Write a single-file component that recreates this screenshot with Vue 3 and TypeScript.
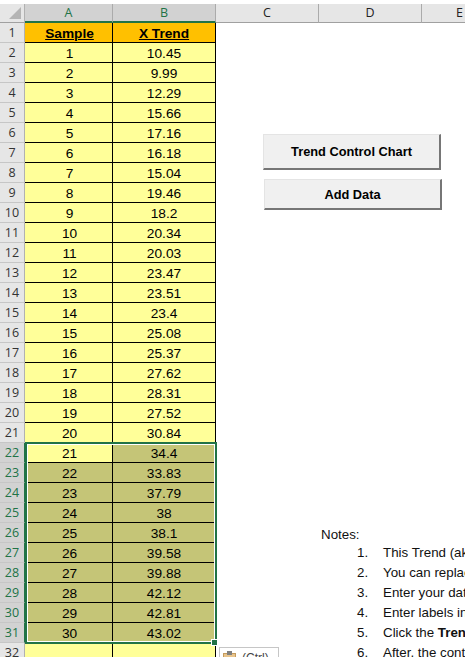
<script setup lang="ts">
const values = [
  '10.45', '9.99', '12.29', '15.66', '17.16', '16.18', '15.04', '19.46', '18.2', '20.34',
  '20.03', '23.47', '23.51', '23.4', '25.08', '25.37', '27.62', '28.31', '27.52', '30.84',
  '34.4', '33.83', '37.79', '38', '38.1', '39.58', '39.88', '42.12', '42.81', '43.02'
]

const rows = values.map((value, i) => ({ row: i + 2, sample: i + 1, value }))

const notes = [
  'This Trend (aka Run Chart) shows',
  'You can replace the sample data',
  'Enter your data in the yellow cells',
  'Enter labels in the header row',
  '',
  'After, the control chart appears'
]
</script>

<template>
  <div class="sheet">
    <div class="col-heads">
      <div class="corner"><span class="triangle" /></div>
      <div class="head head-a selected">A</div>
      <div class="head head-b selected">B</div>
      <div class="head head-c">C</div>
      <div class="head head-c">D</div>
      <div class="head head-e">E</div>
    </div>

    <div class="body">
      <div class="table">
        <div class="row-no">1</div>
        <div class="cell title cell-a"><u>Sample</u></div>
        <div class="cell title cell-b"><u>X Trend</u></div>

        <template v-for="r in rows" :key="r.row">
          <div class="row-no" :class="{ picked: r.row >= 22 }">{{ r.row }}</div>
          <div class="cell cell-a" :class="{ shaded: r.row > 22 }">{{ r.sample }}</div>
          <div class="cell cell-b" :class="{ shaded: r.row >= 22 }">{{ r.value }}</div>
        </template>

        <div class="row-no">32</div>
        <div class="cell cell-a" />
        <div class="cell cell-b" />

        <div class="selection"><span class="handle" /></div>
      </div>

      <div class="side">
        <div class="buttons">
          <button class="macro-btn first">Trend Control Chart</button>
          <button class="macro-btn second">Add Data</button>
        </div>

        <div class="notes">
          <div class="notes-title">Notes:</div>
          <ol class="notes-list">
            <li v-for="(note, i) in notes" :key="i">
              <span class="num">{{ i + 1 }}.</span>
              <span v-if="i === 4">Click the <b>Trend Control Chart</b> button</span>
              <span v-else>{{ note }}</span>
            </li>
          </ol>
        </div>

        <div class="paste">
          <svg width="14" height="14" viewBox="0 0 14 14">
            <rect x="0.5" y="2.5" width="12" height="11" fill="#e8c48c" stroke="#c49a5c" />
            <rect x="4" y="0" width="5" height="4" fill="#7f7f7f" />
          </svg>
          <span>(Ctrl)</span>
        </div>
      </div>
    </div>
  </div>
</template>

<style>
html,
body {
  margin: 0;
  overflow: hidden;
  background: #fff;
}
</style>

<style scoped>
.sheet {
  width: 465px;
  height: 657px;
  overflow: hidden;
  font-family: 'Liberation Sans', Arial, sans-serif;
  font-size: 13.33px;
  color: #000;
  padding-top: 4px;
  box-sizing: border-box;
}

.col-heads {
  display: flex;
  height: 19px;
  background: #e6e6e6;
  box-sizing: border-box;
}

.corner {
  width: 25px;
  flex: none;
  position: relative;
  background: #e6e6e6;
  box-sizing: border-box;
  border-right: 1px solid #b1b1b1;
  border-bottom: 1px solid #a0a0a0;
}

.triangle {
  position: absolute;
  right: 3px;
  bottom: 3px;
  width: 0;
  height: 0;
  border-left: 12px solid transparent;
  border-bottom: 12px solid #b4b4b4;
}

.head {
  flex: none;
  box-sizing: border-box;
  text-align: center;
  line-height: 18px;
  font-family: 'Open Sans', 'Noto Sans', sans-serif;
  font-size: 12.5px;
  border-right: 1px solid #ababab;
  border-bottom: 1px solid #a0a0a0;
  color: #222;
}

.head.selected {
  background: #d2d2d2;
  color: #217346;
  border-bottom: 2px solid #217346;
}

.head-a {
  width: 88px;
}

.head-b {
  width: 103px;
}

.head-c {
  width: 103px;
}

.head-e {
  width: 76px;
}

.body {
  display: flex;
}

.table {
  position: relative;
  flex: none;
  width: 216px;
  display: grid;
  grid-template-columns: 25px 88px 103px;
  grid-auto-rows: 20px;
}

.row-no {
  background: #e6e6e6;
  border-right: 1px solid #b1b1b1;
  border-bottom: 1px solid #c6c6c6;
  box-sizing: border-box;
  text-align: center;
  font-family: 'Open Sans', 'Noto Sans', sans-serif;
  font-size: 12.5px;
  line-height: 20px;
  color: #333;
}

.row-no.picked {
  background: #d2d2d2;
  color: #217346;
  border-right: 1px solid #217346;
}

.cell {
  background: #ffff99;
  box-sizing: border-box;
  border-bottom: 1px solid #000;
  border-right: 1px solid #000;
  text-align: center;
  font-size: 13.7px;
  line-height: 21px;
  white-space: nowrap;
}

.cell-a {
  padding-left: 2px;
}

.cell.shaded {
  background: #c5c577;
}

.title {
  background: #ffc000;
  font-weight: 700;
}

.selection {
  position: absolute;
  left: 25px;
  top: 419px;
  width: 192px;
  height: 202px;
  box-sizing: border-box;
  border: 2px solid #217346;
  outline: 1px solid #fff;
  outline-offset: -3px;
  pointer-events: none;
}

.handle {
  position: absolute;
  right: -3px;
  bottom: -4px;
  width: 5px;
  height: 5px;
  background: #217346;
  border: 1px solid #fff;
}

.side {
  position: relative;
  flex: 1;
  min-width: 0;
  overflow: hidden;
  padding-top: 111px;
}

.buttons {
  display: flex;
  flex-direction: column;
  gap: 9px;
  padding-left: 47px;
}

.macro-btn {
  display: block;
  padding: 0;
  box-sizing: border-box;
  background: #f0f0f0;
  border: 0;
  border-top: 1px solid #e4e4e4;
  border-left: 1px solid #e4e4e4;
  border-right: 2px solid #767676;
  border-bottom: 2px solid #767676;
  font-family: 'Liberation Sans', Arial, sans-serif;
  font-size: 12.8px;
  font-weight: 700;
  color: #000;
  white-space: nowrap;
}

.macro-btn.first {
  width: 178px;
  height: 36px;
}

.macro-btn.second {
  width: 178px;
  height: 31px;
  margin-left: 1px;
  padding-top: 1px;
}

.notes {
  position: absolute;
  left: 105px;
  top: 502px;
  white-space: nowrap;
  line-height: 20px;
  color: #111;
}

.notes-title {
  height: 18px;
}

.notes-list {
  list-style: none;
  margin: 0;
  padding: 0 0 0 36px;
}

.notes-list li {
  display: flex;
  height: 20px;
}

.num {
  width: 26px;
  flex: none;
}

.paste {
  position: absolute;
  left: 3px;
  top: 624px;
  width: 60px;
  height: 24px;
  box-sizing: border-box;
  background: #fff;
  border: 1px solid #c6c6c6;
  display: flex;
  align-items: flex-start;
  gap: 5px;
  padding: 3px 0 0 3px;
  font-size: 12px;
  color: #444;
}
</style>
